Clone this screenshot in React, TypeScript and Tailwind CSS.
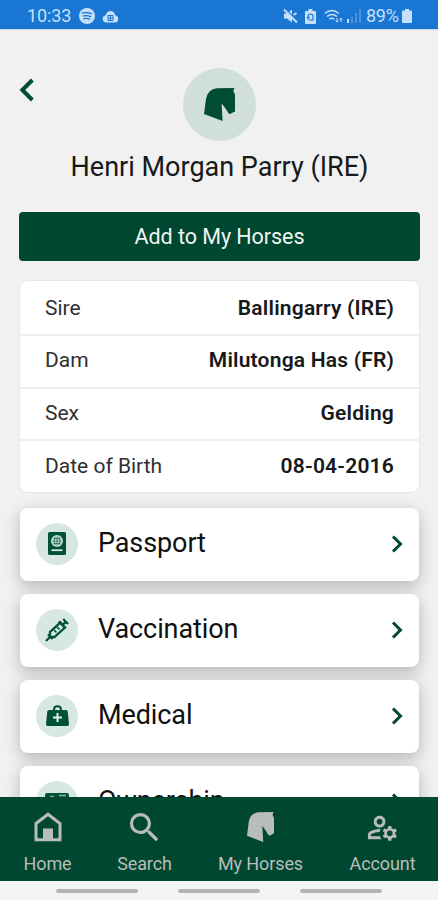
import type { ReactNode } from "react";
import { MdOutlineManageAccounts, MdSearch } from "react-icons/md";

const details = [
  { label: "Sire", value: "Ballingarry (IRE)" },
  { label: "Dam", value: "Milutonga Has (FR)" },
  { label: "Sex", value: "Gelding" },
  { label: "Date of Birth", value: "08-04-2016" },
];

function HorseHead({ className }: { className: string }) {
  return (
    <svg viewBox="0 0 30 33" preserveAspectRatio="none" fill="currentColor" className={className}>
      <path d="M0 26 2 10.500Q3.500 1.500 12.500 .3L29.500 0 28.300 3 30 6.500V23.500L25 26Q22.800 25 21.800 22L17 15.200 18 33Z" />
    </svg>
  );
}

function Chevron({ className }: { className: string }) {
  return (
    <svg viewBox="0 0 12 18" fill="none" stroke="currentColor" strokeWidth="3" className={className}>
      <path d="m2 1.500 7.500 7.500L2 16.500" />
    </svg>
  );
}

function PassportIcon() {
  return (
    <svg width="18" height="23" viewBox="0 0 18 23" fill="none">
      <rect width="18" height="23" rx="1.5" fill="#005234" />
      <circle cx="9" cy="9" r="6" fill="#c3dbd2" />
      <path d="M4.500 9h9M9 4.500v9M5.500 6.500h7M5.500 11.500h7M7 4.800q-2 4.200 0 8.400M11 4.800q2 4.200 0 8.400" stroke="#005234" strokeWidth=".6" />
      <path d="M3.500 18.200h11" stroke="#d7e7e1" strokeWidth="1.8" />
    </svg>
  );
}

function SyringeIcon() {
  return (
    <svg width="24" height="24" viewBox="0 0 24 24" fill="none" stroke="#005234" strokeWidth="2.3">
      <path d="m1 23 5-5M3 16.500 7.500 21M5 17.500V14L15.500 4.500l4.500 5L9.500 19H6M18 6.500 21 3.500M18.200 1l4.800 5M13.700 3.500l7 7" />
      <path d="m9 12 2.500 2.500M12 9l2.500 2.500" strokeWidth="1.7" />
    </svg>
  );
}

function MedicalIcon() {
  return (
    <svg width="23" height="21" viewBox="0 0 23 21" fill="none">
      <path d="M8 6V4.500Q8 1.200 11.500 1.200T15 4.500V6" stroke="#005234" strokeWidth="2" />
      <path d="M3 5h17q1.500 0 1.700 1.500L23 19q0 2-1.500 2h-20Q0 21 0 19L1.300 6.500Q1.500 5 3 5Z" fill="#005234" />
      <path d="M11.500 8v9M7 12.500h9" stroke="#e3efea" strokeWidth="2" />
    </svg>
  );
}

function OwnershipIcon() {
  return (
    <svg width="24" height="18" viewBox="0 0 24 18" fill="none">
      <rect width="24" height="18" rx="2" fill="#005234" />
      <path d="M14 2.500h7M14 5.500h7M14 8.500h5" stroke="#8eb6a6" strokeWidth="1.3" />
      <circle cx="7" cy="5" r="2.500" fill="#8eb6a6" />
    </svg>
  );
}

function HomeIcon() {
  return (
    <svg width="28" height="30" viewBox="0 0 28 30" fill="none">
      <path d="M2 11.500 14 2.200l12 9.300v16.300H2Z" stroke="currentColor" strokeWidth="3" />
      <path d="M9 16.500h10V28H9Z" fill="currentColor" />
    </svg>
  );
}

const sections = [
  { label: "Passport", icon: <PassportIcon /> },
  { label: "Vaccination", icon: <SyringeIcon /> },
  { label: "Medical", icon: <MedicalIcon /> },
  { label: "Ownership", icon: <OwnershipIcon /> },
];

function StatusBar() {
  return (
    <header className="flex h-[29px] shrink-0 items-center justify-between bg-[#1976d2] pr-[26px] pl-[27px] text-[18px] leading-none text-[#c5e0fb]">
      <div className="flex items-center pt-[3px]">
        <span className="w-[46px] whitespace-nowrap tracking-[-0.1px]">10:33</span>
        <svg width="16" height="16" viewBox="0 0 16 16" fill="none" className="ml-1.5">
          <circle cx="8" cy="8" r="8" fill="#c5e0fb" />
          <path d="M3 5.200q5-1.500 10 .7M3.700 8.100q4.300-1.200 8.300.7M4.300 10.800q3.500-1 6.700.6" stroke="#1976d2" strokeWidth="1.3" />
        </svg>
        <svg width="17" height="13" viewBox="0 0 17 13" className="ml-[7px]">
          <path d="M4 12.500a3.700 3.700 0 0 1-.3-7.300Q5 1 8.500 1t4.700 4.200a3.700 3.700 0 0 1-.2 7.300Z" fill="#c5e0fb" />
          <path d="M6 5.500h5v5H6ZM8.500 5.500v5M6 8h5" fill="none" stroke="#1976d2" />
        </svg>
      </div>
      <div className="flex items-center pt-[3px]">
        <svg width="15" height="15" viewBox="0 0 15 15">
          <path d="M1 4.500h3l5-4v13l-5-4H1Z" fill="#c5e0fb" />
          <path d="m2.500 0 12 12" stroke="#1976d2" strokeWidth="1.4" />
          <path d="m1 .5 13 13M10.500 6l3-2" stroke="#c5e0fb" strokeWidth="2" />
        </svg>
        <svg width="11" height="15" viewBox="0 0 11 15" className="ml-[7px]">
          <path d="M3.500 0h4v2H10q1 0 1 1v11q0 1-1 1H1q-1 0-1-1V3q0-1 1-1h2.500Z" fill="#c5e0fb" />
          <path d="M3 9V7.500a2.500 2.500 0 0 1 5 0V10M8 9.500v1.500H3.500M2 8l1 1.500L4.500 8" fill="none" stroke="#1976d2" strokeWidth="1.2" />
        </svg>
        <svg width="19" height="15" viewBox="0 0 19 15" fill="none" stroke="#c5e0fb" strokeWidth="1.4" className="ml-2">
          <path d="M.8 4.500q7-6 14 0M3 7.500q5-4 10 0M5.300 10.300q2.700-2 5 0" />
          <path d="M13 9v4m-1.500-1.500L13 13l1.500-1.500M17 13V9m-1.500 1.500L17 9l1.500 1.500" strokeWidth="1" />
        </svg>
        <svg width="14" height="14" viewBox="0 0 14 14" className="ml-1">
          <path d="M0 10h2v4H0Z" fill="#c5e0fb" />
          <path d="M4 8h2v6H4ZM8 4h2v10H8ZM12 0h2v14h-2Z" fill="#4a92dc" />
        </svg>
        <span className="ml-[5px] w-[36px] whitespace-nowrap tracking-[-0.3px]">89%</span>
        <svg width="10" height="14" viewBox="0 0 10 14">
          <path d="M3 0h4v1.500h2q1 0 1 1V13q0 1-1 1H1q-1 0-1-1V2.500q0-1 1-1h2Z" fill="#c5e0fb" />
        </svg>
      </div>
    </header>
  );
}

function NavItem({ label, icon, width }: { label: string; icon: ReactNode; width: string }) {
  return (
    <button className={`flex flex-col items-center ${width}`}>
      <div className="flex h-[34px] items-center">{icon}</div>
      <span className="mt-[9px] text-[18px] leading-[22px] tracking-[-0.1px] whitespace-nowrap">{label}</span>
    </button>
  );
}

export default function App() {
  return (
    <div className="flex h-[900px] w-[438px] flex-col overflow-hidden bg-[#f1f1f1] font-['Roboto',sans-serif] text-[#17191a]">
      <StatusBar />

      <main className="min-h-0 flex-1 overflow-hidden border-t border-[#c5dcf3] pr-[18px] pl-[19px]">
        {/* Horse header */}
        <div className="grid grid-cols-[1fr_73px_1fr] pt-[38px]">
          <button aria-label="Back" className="mt-[10px] self-start text-[#004d32]">
            <Chevron className="h-6 w-4 rotate-180" />
          </button>
          <div className="grid h-[73px] w-[73px] place-items-center rounded-full bg-[#d0dfda] text-[#004d32]">
            <HorseHead className="h-[33px] w-[31px]" />
          </div>
        </div>
        <h1 className="mt-[10px] text-center text-[27px] leading-[32px] whitespace-nowrap">
          Henri Morgan Parry (IRE)
        </h1>
        <button className="mt-[29px] h-[49px] w-full rounded bg-[#004731] pt-0.5 text-[21.5px] tracking-[-0.05px] text-[#f0f5f2]">
          Add to My Horses
        </button>

        {/* Pedigree details */}
        <dl className="mx-px mt-5 flex h-[211px] flex-col rounded-lg bg-white ring-1 ring-[#e7e7e7]">
          {details.map((d) => (
            <div
              key={d.label}
              className="flex flex-1 items-center justify-between border-t-2 border-[#eeeeee] px-[25px] text-[21px] first:border-transparent"
            >
              <dt className="text-[#303030]">{d.label}</dt>
              <dd className="font-semibold tracking-[0.2px] whitespace-nowrap">{d.value}</dd>
            </div>
          ))}
        </dl>

        <div className="mx-px mt-4 flex flex-col gap-[13px]">
          {sections.map((s) => (
            <button
              key={s.label}
              className="flex h-[73px] shrink-0 items-center rounded-lg bg-white px-4 pb-0.5 shadow-[0_5px_16px_rgba(0,0,0,0.25)]"
            >
              <span className="grid h-[42px] w-[42px] place-items-center rounded-full bg-[#d7e7e1]">
                {s.icon}
              </span>
              <span className="ml-5 flex-1 text-left text-[27px] tracking-[-0.1px] text-[#101010]">{s.label}</span>
              <Chevron className="h-[18px] w-3 text-[#004731]" />
            </button>
          ))}
        </div>
      </main>

      <nav className="relative z-10 flex h-[84px] shrink-0 bg-[#004731] pt-[13px] text-[#b9bdba]">
        <NavItem label="Home" icon={<HomeIcon />} width="w-[95px]" />
        <NavItem label="Search" icon={<MdSearch size={39} />} width="w-[99px]" />
        <NavItem label="My Horses" icon={<HorseHead className="h-[30px] w-[27px]" />} width="w-[133px]" />
        <NavItem label="Account" icon={<MdOutlineManageAccounts size={35} />} width="w-[111px]" />
      </nav>

      {/* Gesture bar */}
      <footer className="flex h-[19px] shrink-0 items-center justify-center gap-10 bg-[#f4f4f4] pt-px">
        <span className="h-1 w-[82px] rounded-full bg-[#b4b4b4]" />
        <span className="h-1 w-[82px] rounded-full bg-[#b4b4b4]" />
        <span className="h-1 w-[82px] rounded-full bg-[#b4b4b4]" />
      </footer>
    </div>
  );
}
